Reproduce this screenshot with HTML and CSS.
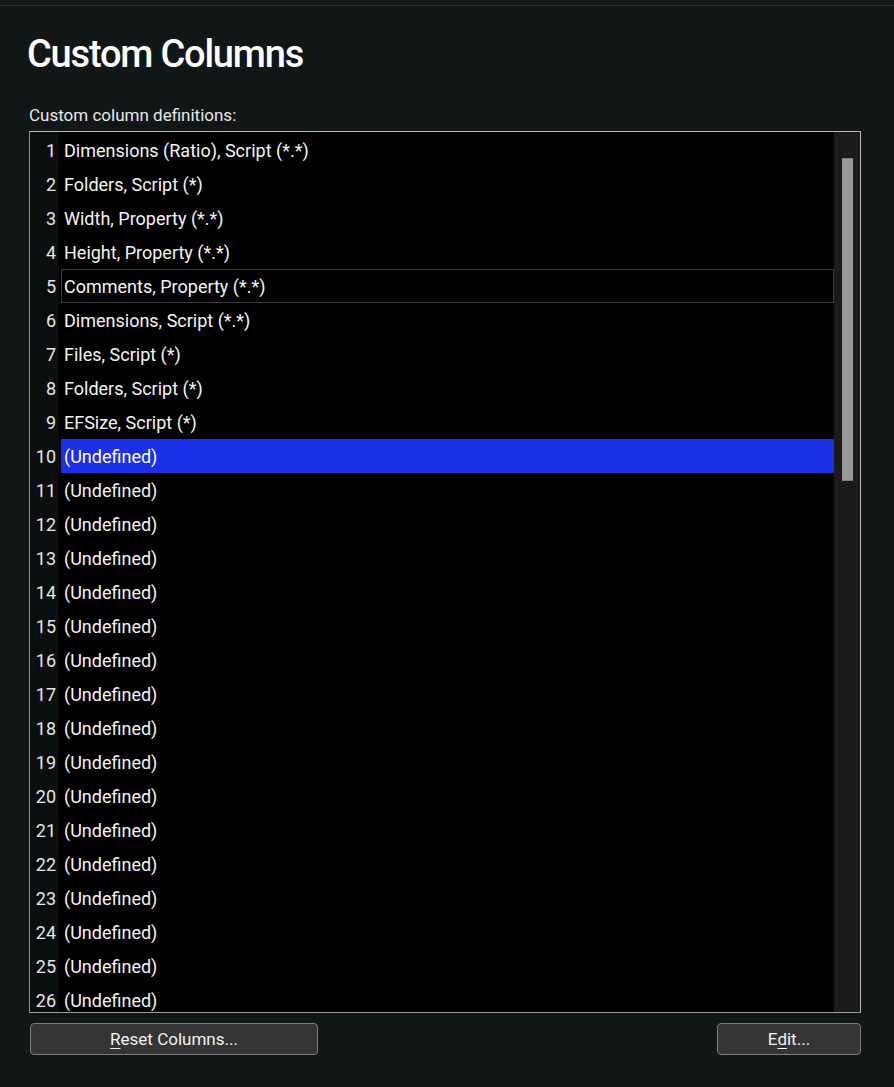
FILE: index.html
```html
<!DOCTYPE html>
<html>
<head>
<meta charset="utf-8">
<link rel="stylesheet" href="styles.css">
</head>
<body>
<div class="topbar"></div>
<main class="page">
  <h1 class="title">Custom Columns</h1>
  <div class="label">Custom column definitions:</div>
  <div class="listbox">
    <div class="list">
      <div class="row"><span class="num">1</span><span class="item">Dimensions (Ratio), Script (*.*)</span></div>
      <div class="row"><span class="num">2</span><span class="item">Folders, Script (*)</span></div>
      <div class="row"><span class="num">3</span><span class="item">Width, Property (*.*)</span></div>
      <div class="row"><span class="num">4</span><span class="item">Height, Property (*.*)</span></div>
      <div class="row"><span class="num">5</span><span class="item focus">Comments, Property (*.*)</span></div>
      <div class="row"><span class="num">6</span><span class="item">Dimensions, Script (*.*)</span></div>
      <div class="row"><span class="num">7</span><span class="item">Files, Script (*)</span></div>
      <div class="row"><span class="num">8</span><span class="item">Folders, Script (*)</span></div>
      <div class="row"><span class="num">9</span><span class="item">EFSize, Script (*)</span></div>
      <div class="row"><span class="num">10</span><span class="item selected">(Undefined)</span></div>
      <div class="row"><span class="num">11</span><span class="item">(Undefined)</span></div>
      <div class="row"><span class="num">12</span><span class="item">(Undefined)</span></div>
      <div class="row"><span class="num">13</span><span class="item">(Undefined)</span></div>
      <div class="row"><span class="num">14</span><span class="item">(Undefined)</span></div>
      <div class="row"><span class="num">15</span><span class="item">(Undefined)</span></div>
      <div class="row"><span class="num">16</span><span class="item">(Undefined)</span></div>
      <div class="row"><span class="num">17</span><span class="item">(Undefined)</span></div>
      <div class="row"><span class="num">18</span><span class="item">(Undefined)</span></div>
      <div class="row"><span class="num">19</span><span class="item">(Undefined)</span></div>
      <div class="row"><span class="num">20</span><span class="item">(Undefined)</span></div>
      <div class="row"><span class="num">21</span><span class="item">(Undefined)</span></div>
      <div class="row"><span class="num">22</span><span class="item">(Undefined)</span></div>
      <div class="row"><span class="num">23</span><span class="item">(Undefined)</span></div>
      <div class="row"><span class="num">24</span><span class="item">(Undefined)</span></div>
      <div class="row"><span class="num">25</span><span class="item">(Undefined)</span></div>
      <div class="row"><span class="num">26</span><span class="item">(Undefined)</span></div>
    </div>
    <div class="scrollbar"><div class="thumb"></div></div>
  </div>
  <div class="buttons">
    <button class="btn btn-reset"><u>R</u>eset Columns...</button>
    <button class="btn btn-edit">E<u>d</u>it...</button>
  </div>
</main>
</body>
</html>
```
FILE: styles.css
```css
html, body {
  margin: 0;
  padding: 0;
  background: #111617;
}
body {
  font-family: Roboto, "Noto Sans", sans-serif;
  color: #f0f0f0;
  height: 1087px;
  overflow: hidden;
}
.topbar {
  height: 5px;
  border-bottom: 1px solid #252d2e;
}
.page {
  padding: 0 33px 0 29px;
}
.title {
  margin: 0;
  padding-top: 24px;
  font-size: 38px;
  line-height: 48px;
  font-weight: 500;
  color: #ffffff;
  margin-left: -2px;
  letter-spacing: -1.2px;
}
.label {
  margin-top: 26px;
  font-size: 17px;
  line-height: 22px;
  color: #e8e8e8;
  height: 27px;
}
.listbox {
  display: flex;
  height: 880px;
  border: 1px solid #b8b8b8;
  border-left-color: #8c8c8c;
  border-bottom-color: #9a9a9a;
  background: #000;
  overflow: hidden;
}
.list {
  flex: 1;
  padding-top: 1px;
  background: linear-gradient(to right, #0a0e0f 29px, #000 29px);
  overflow: hidden;
}
.row {
  display: flex;
  height: 34px;
  font-size: 18px;
  line-height: 35px;
  overflow: hidden;
}
.num {
  width: 26px;
  padding-right: 3px;
  text-align: right;
  color: #e6e6e6;
}
.item {
  flex: 1;
  margin-left: 2px;
  padding-left: 3px;
  color: #f4f4f4;
  white-space: nowrap;
}
.item.selected {
  background: #1c30e6;
  color: #ffffff;
}
.item.focus {
  outline: 1px solid #3c3c3c;
  outline-offset: -1px;
}
.scrollbar {
  width: 26px;
  background: #1b1b1b;
  padding-top: 26px;
  box-sizing: border-box;
}
.thumb {
  margin-left: 8px;
  width: 11px;
  height: 323px;
  background: #9a9a9a;
  border-top: 1px solid #7e7e7e;
  border-bottom: 1px solid #7e7e7e;
  box-sizing: border-box;
}
.buttons {
  display: flex;
  justify-content: space-between;
  margin-top: 10px;
  padding-left: 1px;
}
.btn {
  height: 32px;
  background: #353535;
  border: 1px solid #7c7c7c;
  border-radius: 4px;
  color: #f2f2f2;
  font-family: Roboto, "Noto Sans", sans-serif;
  font-size: 17px;
  padding: 0;
}
.btn u {
  text-underline-offset: 3px;
}
.btn-reset {
  width: 288px;
}
.btn-edit {
  width: 144px;
}
```
